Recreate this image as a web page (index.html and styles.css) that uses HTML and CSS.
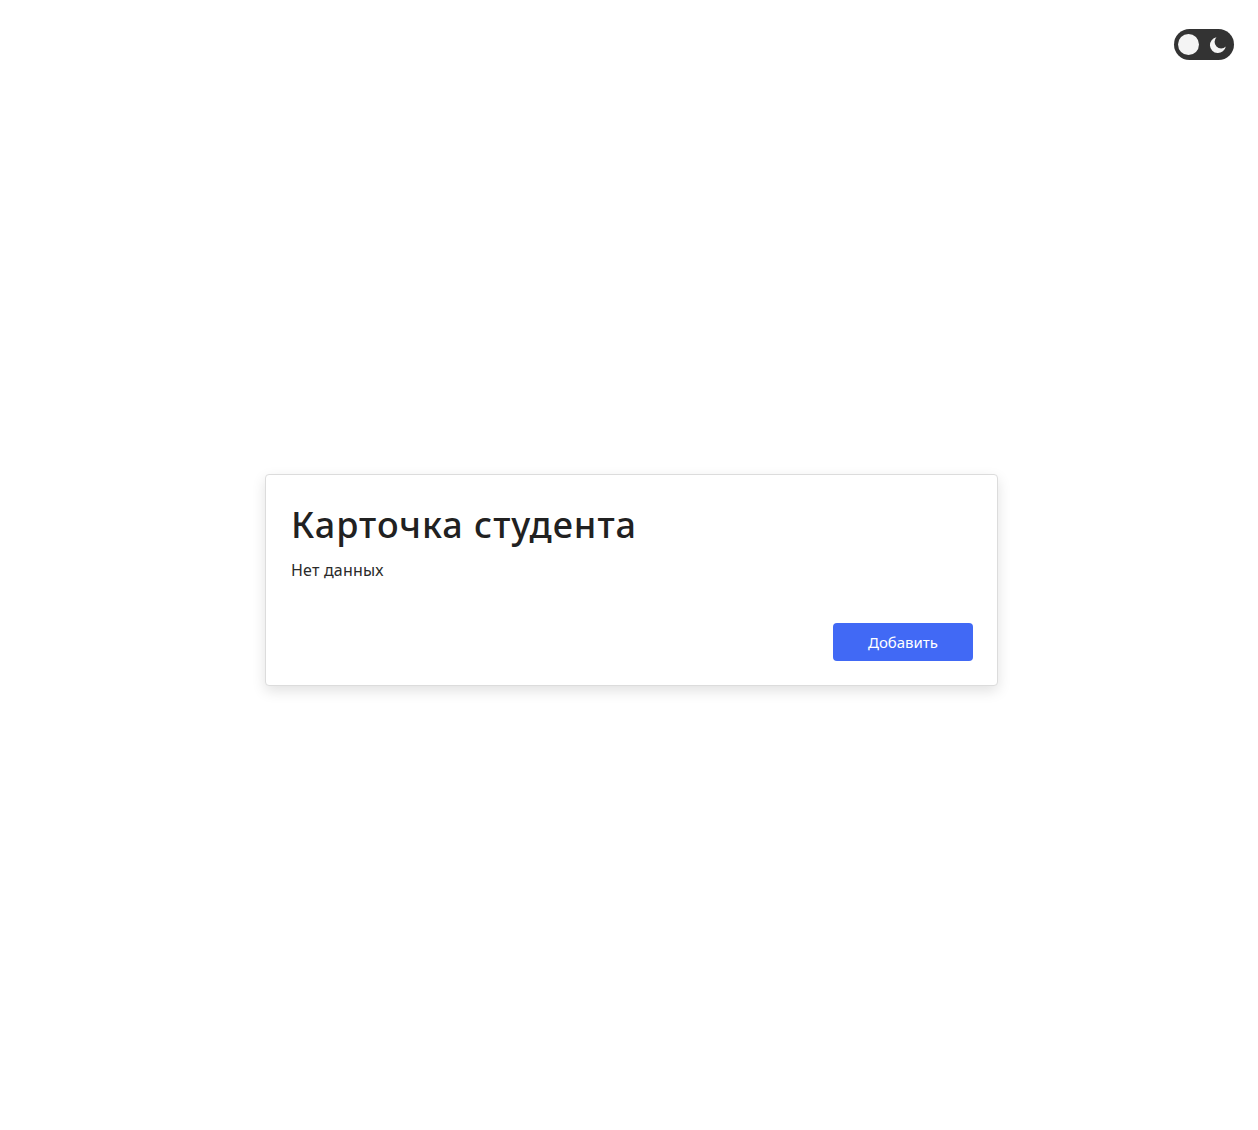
FILE: index.html
```html
<!DOCTYPE html>
<html lang="ru">
<head>
<meta charset="utf-8">
<title>Карточка студента</title>
<link rel="stylesheet" href="styles.css">
</head>
<body>
<div class="theme-toggle" aria-label="Переключить тему">
  <span class="knob"></span>
  <svg class="moon" width="20" height="20" viewBox="0 0 20 20" aria-hidden="true">
    <path d="M8.5 2.2 A8 8 0 1 0 17.8 11.5 A6.4 6.4 0 0 1 8.5 2.2 Z" fill="#f4f4f4"/>
  </svg>
</div>
<main class="page">
  <section class="card">
    <h1 class="card-title">Карточка студента</h1>
    <p class="card-text">Нет данных</p>
    <div class="card-actions">
      <button class="btn-primary" type="button">Добавить</button>
    </div>
  </section>
</main>
</body>
</html>
```
FILE: styles.css
```css
* { box-sizing: border-box; }
html, body { margin: 0; padding: 0; }
body {
  background: #ffffff;
  font-family: "Noto Sans", "Open Sans", "Liberation Sans", sans-serif;
  color: #212529;
  min-height: 1130px;
  position: relative;
}
.theme-toggle {
  position: absolute;
  top: 29px;
  right: 24px;
  width: 60px;
  height: 31px;
  border-radius: 16px;
  background: #333333;
  display: flex;
  align-items: center;
  justify-content: space-between;
  padding: 0 4px 0 4px;
}
.knob {
  width: 21px;
  height: 21px;
  border-radius: 50%;
  background: #f4f4f4;
}
.moon { display: block; margin-right: 2px; }
.page {
  padding-top: 474px;
  display: flex;
  justify-content: center;
  padding-left: 5px;
}
.card {
  width: 733px;
  background: #fff;
  border: 1px solid #dcdcdc;
  border-radius: 4px;
  box-shadow: 0 5px 14px rgba(0,0,0,0.12);
  padding: 25px 24px 24px 25px;
}
.card-title {
  margin: 0;
  font-size: 36px;
  font-weight: 500;
  line-height: 50px;
  color: #212121;
  letter-spacing: 1px;
}
.card-text {
  margin: 9px 0 0;
  font-size: 16px;
  line-height: 22px;
  color: #2a2a2a;
  letter-spacing: 0.2px;
}
.card-actions {
  display: flex;
  justify-content: flex-end;
  margin-top: 42px;
}
.btn-primary {
  width: 140px;
  height: 38px;
  border: none;
  border-radius: 4px;
  background: #4169f5;
  color: #fff;
  font-family: inherit;
  font-size: 15px;
}
```
